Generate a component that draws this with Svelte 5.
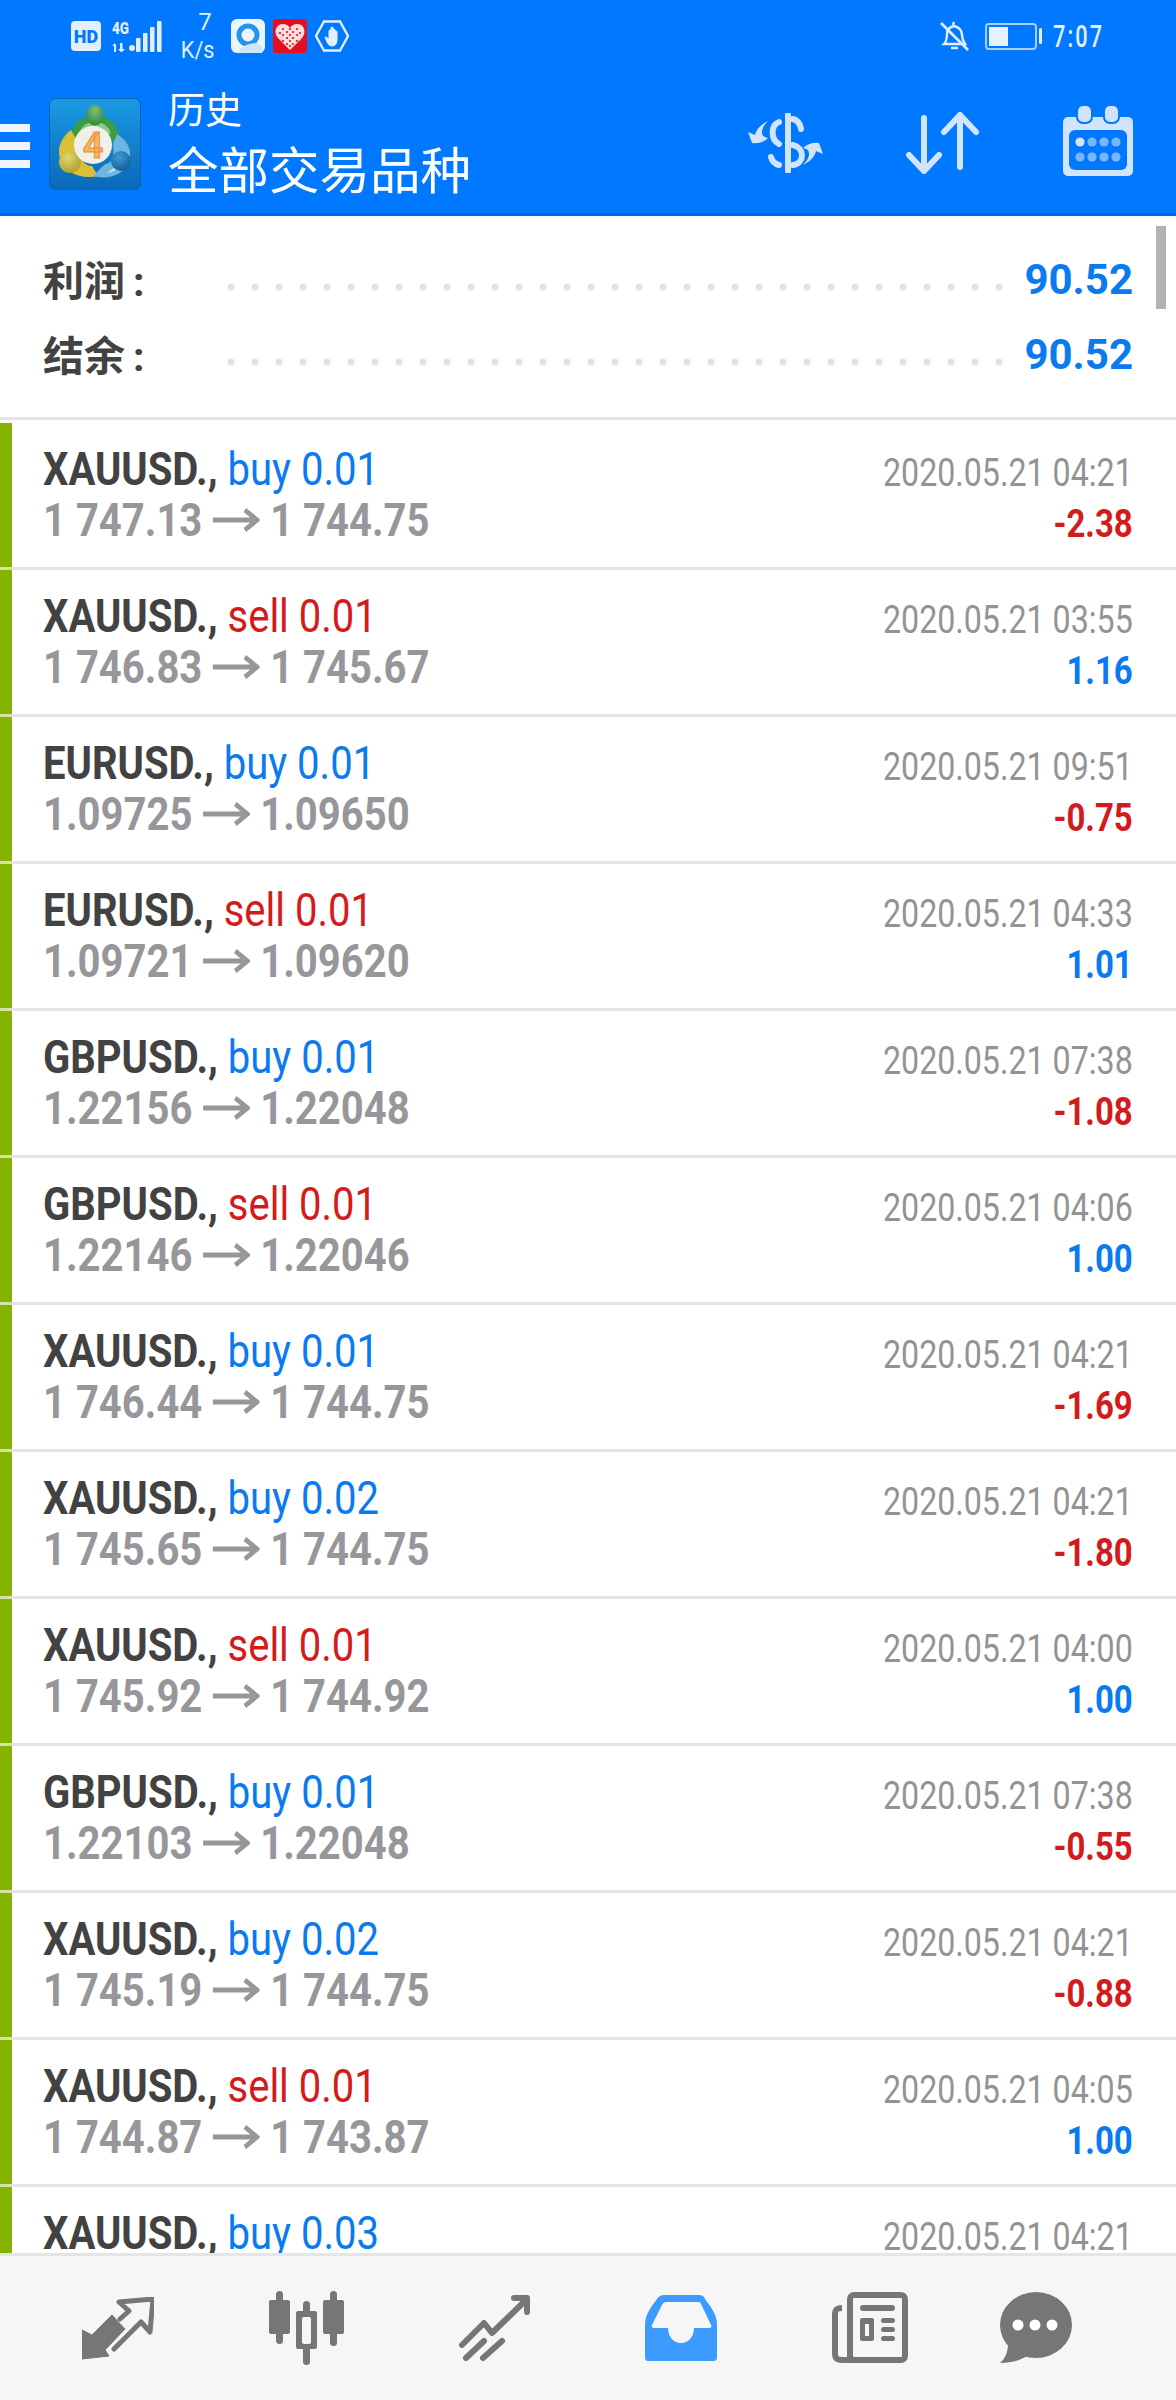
<script>
	const rows = [
		['XAUUSD.,', 'buy', '0.01', '1 747.13', '1 744.75', '2020.05.21 04:21', '-2.38'],
		['XAUUSD.,', 'sell', '0.01', '1 746.83', '1 745.67', '2020.05.21 03:55', '1.16'],
		['EURUSD.,', 'buy', '0.01', '1.09725', '1.09650', '2020.05.21 09:51', '-0.75'],
		['EURUSD.,', 'sell', '0.01', '1.09721', '1.09620', '2020.05.21 04:33', '1.01'],
		['GBPUSD.,', 'buy', '0.01', '1.22156', '1.22048', '2020.05.21 07:38', '-1.08'],
		['GBPUSD.,', 'sell', '0.01', '1.22146', '1.22046', '2020.05.21 04:06', '1.00'],
		['XAUUSD.,', 'buy', '0.01', '1 746.44', '1 744.75', '2020.05.21 04:21', '-1.69'],
		['XAUUSD.,', 'buy', '0.02', '1 745.65', '1 744.75', '2020.05.21 04:21', '-1.80'],
		['XAUUSD.,', 'sell', '0.01', '1 745.92', '1 744.92', '2020.05.21 04:00', '1.00'],
		['GBPUSD.,', 'buy', '0.01', '1.22103', '1.22048', '2020.05.21 07:38', '-0.55'],
		['XAUUSD.,', 'buy', '0.02', '1 745.19', '1 744.75', '2020.05.21 04:21', '-0.88'],
		['XAUUSD.,', 'sell', '0.01', '1 744.87', '1 743.87', '2020.05.21 04:05', '1.00'],
		['XAUUSD.,', 'buy', '0.03', '', '', '2020.05.21 04:21', '']
	];
	const summary = [
		['利润', '90.52'],
		['结余', '90.52']
	];
	// little red holes in the heart icon
	const heartHoles = [
		[10, 10], [14, 13], [10, 16], [14, 19], [10, 22], [17, 10], [17, 16], [17, 22],
		[20, 13], [24, 10], [20, 19], [24, 16], [24, 22], [17, 27], [14, 25], [20, 25], [7, 14], [27, 14]
	];
</script>

<div class="screen">
	<header class="header">
		<div class="status">
			<div class="status-left">
				<svg class="hd" width="30" height="30" viewBox="0 0 30 30">
					<rect width="30" height="30" rx="4" fill="#e3effd" />
					<text x="15" y="21.500" text-anchor="middle" class="hd-text">HD</text>
				</svg>
				<svg class="signal" width="50" height="32" viewBox="0 0 50 32">
					<text x="0" y="14" textLength="17" lengthAdjust="spacingAndGlyphs" class="net">4G</text>
					<g fill="#e3effd">
						<path d="M2 24h2v8H2zM0 26l3-3v3zM8 23h2.500v6H13l-3.500 3.500L6 29h2z" />
						<circle cx="20" cy="28" r="3" />
						<rect x="24" y="18" width="4.500" height="14" rx="1" />
						<rect x="31" y="13" width="4.500" height="19" rx="1" />
						<rect x="38" y="7" width="4.500" height="25" rx="1" />
						<rect x="45" y="1" width="4.500" height="31" rx="1" />
					</g>
				</svg>
				<div class="speed"><span class="speed-num">7</span><span class="speed-unit">K/s</span></div>
				<svg class="app-icon" width="34" height="34" viewBox="0 0 34 34">
					<rect width="34" height="34" rx="6" fill="#eaf4fd" />
					<circle cx="17" cy="16" r="9" fill="none" stroke="#2593ea" stroke-width="5" />
					<path d="M24 24 31 27V34H7C9 28 15 25 24 24z" fill="#cde6f9" />
				</svg>
				<svg class="app-icon heart" width="34" height="34" viewBox="0 0 34 34">
					<rect width="34" height="34" rx="3" fill="#e60f1f" />
					<path d="M17 31 5 19C0 13 3 5 10 5c3 0 5 1 7 4 2-3 4-4 7-4 7 0 10 8 5 14z" fill="#fbdede" />
					<g fill="#e60f1f">
						{#each heartHoles as [cx, cy]}
							<circle {cx} {cy} r="1.100" />
						{/each}
					</g>
				</svg>
				<svg class="app-icon heart" width="34" height="32" viewBox="0 0 34 32">
					<path d="M9 1.500h16L33 16l-8 14.500H9L1 16z" fill="none" stroke="#e3effd" stroke-width="2.400" />
					<path d="M10 17c2 0 3 1 4 3v-9a1 1 0 0 1 2 0V8a1 1 0 0 1 2 0v2a1 1 0 0 1 2 0v2a1 1 0 0 1 2 0v8c0 4-2 6-5 6-4 0-5-4-7-9z" fill="#e3effd" stroke="#e3effd" stroke-width="1" />
				</svg>
			</div>
			<div class="status-right">
				<svg width="29" height="30" viewBox="0 0 29 30">
					<path d="M4 23c3-3 3-6 3-10 0-4 3-7 7-8 4 1 8 4 8 9 0 4 1 6 3 9zM11 27h7M13 4l1-3" fill="none" stroke="#e3effd" stroke-width="2.400" />
					<path d="M1 2 28 29" stroke="#e3effd" stroke-width="2.600" />
				</svg>
				<div class="battery"><span class="battery-fill"></span></div>
				<span class="battery-nub"></span>
				<span class="time">7:07</span>
			</div>
		</div>
		<div class="toolbar">
			<div class="burger"><span></span><span></span><span></span></div>
			<svg class="logo" width="92" height="92" viewBox="0 0 92 92">
				<defs>
					<linearGradient id="logoBg" x1="0" y1="0" x2="0" y2="1">
						<stop offset="0" stop-color="#1a9ae2" />
						<stop offset="1" stop-color="#0a69b8" />
					</linearGradient>
					<radialGradient id="greenHead" cx="0.5" cy="0.3" r="0.7">
						<stop offset="0" stop-color="#7fbd7c" />
						<stop offset="1" stop-color="#2f8a3a" />
					</radialGradient>
					<radialGradient id="yellowHead" cx="0.4" cy="0.3" r="0.8">
						<stop offset="0" stop-color="#e0d774" />
						<stop offset="1" stop-color="#a89a22" />
					</radialGradient>
					<radialGradient id="blueHead" cx="0.4" cy="0.3" r="0.8">
						<stop offset="0" stop-color="#3f9ad2" />
						<stop offset="1" stop-color="#11598f" />
					</radialGradient>
				</defs>
				<rect x="0.500" y="0.500" width="91" height="91" rx="6" fill="url(#logoBg)" stroke="#0b62ab" />
				<path d="M22 38C24 24 34 18 46 18s22 6 24 20L60 46H30z" fill="#3e9a44" />
				<path d="M30 36c2-8 8-12 16-12s14 4 16 12z" fill="#8dc88a" />
				<ellipse cx="46" cy="17" rx="8.500" ry="10.500" fill="url(#greenHead)" />
				<path d="M22 32C12 40 8 50 11 60c4 15 22 22 38 18l-6-10c-8 0-14-8-13-22z" fill="#dcbf34" />
				<path d="M68 36c10 6 16 16 12 28-6 14-22 18-36 14l12-12c6 0 10-6 8-20z" fill="#6fb5e2" />
				<path d="M58 75c10-2 17-6 21-14l-8 4c-4 4-8 6-13 10z" fill="#c5e2f4" />
				<circle cx="21" cy="64" r="11" fill="url(#yellowHead)" />
				<circle cx="72" cy="63" r="10" fill="url(#blueHead)" />
				<circle cx="44" cy="47" r="19" fill="#f1efe9" />
				<text x="44" y="60" text-anchor="middle" class="logo-num">4</text>
			</svg>
			<div class="titles">
				<div class="title-small">历史</div>
				<div class="title-big">全部交易品种</div>
			</div>
			<div class="tools">
				<svg width="79" height="60" viewBox="0 0 79 60">
					<g fill="none" stroke="#d2e4fb" stroke-width="6" stroke-linecap="round">
						<path d="M42 2v56" />
						<path d="M33 9c-8 3-9 17 0 22" />
						<path d="M47 6c4 1 7 4 8 10" />
						<path d="M47 32c12 3 12 18 0 20" />
						<path d="M25 44c1 4 4 7 8 8" />
					</g>
					<path d="M22 8C14 12 10 17 9 22L2 19l4 11c6 1 12-1 16-5-5-1-6-3-6-6 0-4 3-8 6-11z" fill="#d2e4fb" />
					<path d="M57 52c8-4 12-9 13-14l7 3-4-11c-6-1-12 1-16 5 5 1 6 3 6 6 0 4-3 8-6 11z" fill="#d2e4fb" />
				</svg>
				<svg class="tool-sort" width="73" height="63" viewBox="0 0 73 63">
					<g fill="none" stroke="#d2e4fb" stroke-width="6" stroke-linecap="round" stroke-linejoin="round">
						<path d="M18 7v53M3 44l15 16 15-16" />
						<path d="M54 4v52M38 21 54 4l16 17" />
					</g>
				</svg>
				<svg class="tool-cal" width="70" height="71" viewBox="0 0 70 71">
					<rect y="12" width="70" height="59" rx="5" fill="#d2e4fb" />
					<rect x="6" y="25" width="58" height="40" rx="6" fill="#0078ff" />
					<rect x="14" y="0" width="15" height="18" rx="6" fill="#d2e4fb" stroke="#0078ff" stroke-width="2" />
					<rect x="41" y="0" width="15" height="18" rx="6" fill="#d2e4fb" stroke="#0078ff" stroke-width="2" />
					{#each [37, 52] as cy, r}
						{#each [17, 29, 41, 53] as cx, c}
							<circle {cx} {cy} r="4.600" fill={r === 0 && c === 0 ? '#d2e4fb' : '#7ab6ff'} />
						{/each}
					{/each}
				</svg>
			</div>
		</div>
	</header>

	<section class="summary">
		{#each summary as [label, value]}
			<div class="sum-row">
				<span class="sum-label">{label}<span class="colon">:</span></span>
				<span class="dots"></span>
				<span class="sum-value">{value}</span>
			</div>
		{/each}
		<span class="scrollbar"></span>
	</section>

	<main class="list">
		{#each rows as [symbol, side, lots, open, close, date, profit]}
			<div class="row">
				<span class="mark"></span>
				<div class="col-left">
					<div class="line-top squeeze">
						<span class="symbol">{symbol}</span>
						<span class={side}>{side} {lots}</span>
					</div>
					<div class="line-price squeeze">
						<span>{open}</span>
						<svg class="arrow" width="54" height="24" viewBox="0 0 54 24">
							<path d="M0 12h50M37 2l14 10-14 10" fill="none" stroke="#97979b" stroke-width="5" />
						</svg>
						<span>{close}</span>
					</div>
				</div>
				<div class="col-right">
					<div class="date">{date}</div>
					<div class="profit" class:loss={profit.startsWith('-')}>{profit}</div>
				</div>
			</div>
		{/each}
	</main>

	<nav class="nav">
		<svg width="72" height="63" viewBox="0 0 72 63">
			<path d="M0 33v29l27-3-4-6 20-21-13-14-20 20z" fill="#767676" stroke="#767676" stroke-width="1" stroke-linejoin="round" />
			<path d="M32 52 59 25l9 10 3-33-34 3 10 9-9 8" fill="none" stroke="#767676" stroke-width="5" stroke-linejoin="round" stroke-linecap="round" />
		</svg>
		<svg width="75" height="74" viewBox="0 0 75 74">
			<g fill="#767676">
				<rect x="0" y="9" width="21" height="34" rx="2" />
				<rect x="7" y="0" width="7" height="53" rx="3.500" />
				<rect x="27" y="20" width="21" height="38" rx="2" />
				<rect x="34" y="10" width="7" height="64" rx="3.500" />
				<rect x="54" y="9" width="21" height="34" rx="2" />
				<rect x="61" y="0" width="7" height="55" rx="3.500" />
			</g>
			<rect x="33" y="26" width="9" height="27" rx="2" fill="#f6f6f6" />
		</svg>
		<svg width="71" height="66" viewBox="0 0 71 66">
			<g fill="none" stroke="#767676" stroke-width="6" stroke-linecap="round" stroke-linejoin="round">
				<path d="M3 50 25 28l8 10L67 5" />
				<path d="M55 3h13v14" />
				<path d="M7 63 25 46M24 63l19-17" />
			</g>
		</svg>
		<svg width="72" height="66" viewBox="0 0 72 66">
			<path d="M19 0h35c3 0 5 1 6 4 6 8 12 16 12 25v33c0 3-1 4-4 4H4c-3 0-4-1-4-4V29C0 20 6 12 12 4c2-3 4-4 7-4z" fill="#3d9bff" />
			<path d="M21 7h32c2 0 3 1 3.500 3L66 30c1 2 0 3-2 3H49c0 9-6 15-13 15s-13-6-13-15H9c-2 0-3-1-2-3l10-20c1-2 2-3 4-3z" fill="#f6f6f6" />
		</svg>
		<svg width="76" height="72" viewBox="0 0 76 72">
			<path d="M10 16C4 16 3 18 3 22v40c0 4 2 6 7 6h58" fill="none" stroke="#767676" stroke-width="6" />
			<rect x="18" y="3" width="55" height="65" rx="4" fill="none" stroke="#767676" stroke-width="6" />
			<g fill="#767676">
				<rect x="28" y="13" width="35" height="6" rx="3" />
				<rect x="28" y="26" width="14" height="23" rx="2" />
				<rect x="49" y="26" width="14" height="5" rx="2.500" />
				<rect x="49" y="35" width="14" height="5" rx="2.500" />
				<rect x="49" y="44" width="14" height="5" rx="2.500" />
			</g>
			<rect x="33" y="32" width="4" height="12" fill="#f6f6f6" />
		</svg>
		<svg class="nav-chat" width="72" height="72" viewBox="0 0 72 72">
			<ellipse cx="36" cy="33" rx="36" ry="33" fill="#767676" />
			<path d="M8 52C8 60 5 67 0 71c10 0 19-2 27-7z" fill="#767676" />
			<circle cx="18" cy="33" r="5.500" fill="#fff" />
			<circle cx="35" cy="33" r="5.500" fill="#fff" />
			<circle cx="52" cy="33" r="5.500" fill="#fff" />
		</svg>
	</nav>
</div>

<style>
	:global(body) {
		margin: 0;
		background: #fff;
	}

	.screen {
		width: 1176px;
		height: 2400px;
		display: flex;
		flex-direction: column;
		overflow: hidden;
		font-family: Roboto, 'Noto Sans CJK SC', sans-serif;
	}

	.header {
		height: 213px;
		flex: none;
		background: #0078ff;
		border-bottom: 3px solid #0068dd;
		color: #fff;
		display: flex;
		flex-direction: column;
	}

	.status {
		height: 72px;
		flex: none;
		display: flex;
		justify-content: space-between;
		align-items: center;
		padding: 0 72px 0 71px;
	}

	.status-left,
	.status-right {
		display: flex;
		align-items: center;
	}

	.hd-text {
		font: 900 18px Roboto, sans-serif;
		fill: #0078ff;
	}

	.signal {
		margin-left: 11px;
	}

	.net {
		font: 900 17px Roboto, sans-serif;
		fill: #e3effd;
	}

	.speed {
		width: 34px;
		margin: 0 16px 0 19px;
		display: flex;
		flex-direction: column;
		align-items: center;
		color: #e3effd;
	}

	.speed-num {
		font-size: 24px;
		line-height: 24px;
		margin-bottom: 4px;
		margin-left: 14px;
	}

	.speed-unit {
		font-size: 24px;
		line-height: 24px;
		white-space: nowrap;
		transform: scaleX(0.9);
	}

	.heart {
		margin-left: 8px;
	}

	.status-right svg {
		margin-right: 16px;
	}

	.battery {
		width: 52px;
		height: 27px;
		box-sizing: border-box;
		border: 2px solid #a9d0fb;
		border-radius: 4px;
		padding: 2px;
	}

	.battery-fill {
		display: block;
		width: 19px;
		height: 100%;
		background: #e8f2fe;
	}

	.battery-nub {
		width: 3px;
		height: 16px;
		margin-left: 2px;
		background: #e3effd;
		border-radius: 2px;
	}

	.time {
		margin-left: 11px;
		width: 51px;
		font-size: 31px;
		font-weight: 500;
		letter-spacing: 3px;
		color: #e3effd;
		white-space: nowrap;
		transform: scaleX(0.7);
		transform-origin: left;
	}

	.toolbar {
		flex: 1;
		display: flex;
		align-items: center;
	}

	.burger {
		width: 30px;
		margin-right: 19px;
		display: flex;
		flex-direction: column;
		gap: 10px;
		margin-top: 7px;
	}

	.burger span {
		height: 8px;
		background: #eef5ff;
	}

	.logo {
		flex: none;
		margin-top: 3px;
	}

	.logo-num {
		font: 700 36px Roboto, sans-serif;
		fill: #f3b56c;
		stroke: #e8913a;
		stroke-width: 1;
	}

	.titles {
		margin-left: 27px;
		margin-top: 5px;
	}

	.title-small {
		font-size: 37px;
		line-height: 54px;
	}

	.title-big {
		font-size: 50.500px;
		line-height: 66px;
		white-space: nowrap;
	}

	.tools {
		margin-left: auto;
		margin-right: 43px;
		display: flex;
		align-items: center;
	}

	.tool-sort {
		margin-left: 81px;
	}

	.tool-cal {
		margin-left: 84px;
		margin-top: -4px;
	}

	.summary {
		position: relative;
		height: 204px;
		flex: none;
		border-bottom: 3px solid #e5e5e5;
		box-sizing: border-box;
		padding: 34px 43px 0;
		display: flex;
		flex-direction: column;
		gap: 20px;
	}

	.sum-row {
		height: 55px;
		display: flex;
		align-items: center;
	}

	.sum-label {
		width: 184px;
		font-size: 41px;
		font-weight: 700;
		color: #424242;
		white-space: nowrap;
	}

	.colon {
		margin-left: 8px;
	}

	.dots {
		width: 776px;
		height: 8px;
		margin-top: 19px;
		background-image: radial-gradient(circle at 4px 4px, #e2e2e2 3.300px, transparent 3.800px);
		background-size: 24px 8px;
		background-repeat: repeat-x;
	}

	.sum-value {
		margin-left: auto;
		margin-top: 3px;
		font-size: 42px;
		font-weight: 700;
		color: #0a7af0;
	}

	.scrollbar {
		position: absolute;
		right: 10px;
		top: 10px;
		width: 10px;
		height: 83px;
		background: #b3b3b3;
	}

	.list {
		flex: 1;
		overflow: hidden;
		padding-top: 3px;
	}

	.row {
		height: 147px;
		box-sizing: border-box;
		display: flex;
		border-bottom: 3px solid #e5e5e5;
		padding-left: 43px;
		position: relative;
	}

	.mark {
		position: absolute;
		left: 0;
		top: 0;
		bottom: -3px;
		width: 12px;
		box-sizing: border-box;
		background: #84b400;
		border-bottom: 3px solid #d4e4a0;
	}

	.col-left {
		padding-top: 19px;
	}

	.squeeze {
		transform: scaleX(0.87);
		transform-origin: left;
		white-space: nowrap;
	}

	.date,
	.profit {
		transform-origin: right;
		white-space: nowrap;
	}

	.line-top {
		font-size: 46px;
		line-height: 54px;
		height: 54px;
	}

	.symbol {
		font-weight: 700;
		color: #424242;
	}

	.buy {
		color: #0a7af0;
	}

	.sell {
		color: #d31b1b;
	}

	.line-price {
		font-size: 46px;
		line-height: 48px;
		font-weight: 700;
		color: #97979b;
		display: flex;
		align-items: center;
		gap: 12px;
	}

	.col-right {
		margin-left: auto;
		padding: 28px 43px 0 0;
		text-align: right;
	}

	.date {
		font-size: 39px;
		line-height: 44px;
		color: #939393;
		transform: scaleX(0.825);
	}

	.profit {
		margin-top: 6px;
		font-size: 38px;
		line-height: 46px;
		font-weight: 700;
		color: #0a7af0;
		transform: scaleX(0.867);
	}

	.profit.loss {
		color: #d31b1b;
	}

	.nav {
		height: 147px;
		flex: none;
		box-sizing: border-box;
		background: #f6f6f6;
		border-top: 3px solid #e5e5e5;
		display: flex;
		align-items: center;
		gap: 115px;
		padding: 0 0 0 82px;
	}

	.nav-chat {
		margin-left: -23px;
	}
</style>
